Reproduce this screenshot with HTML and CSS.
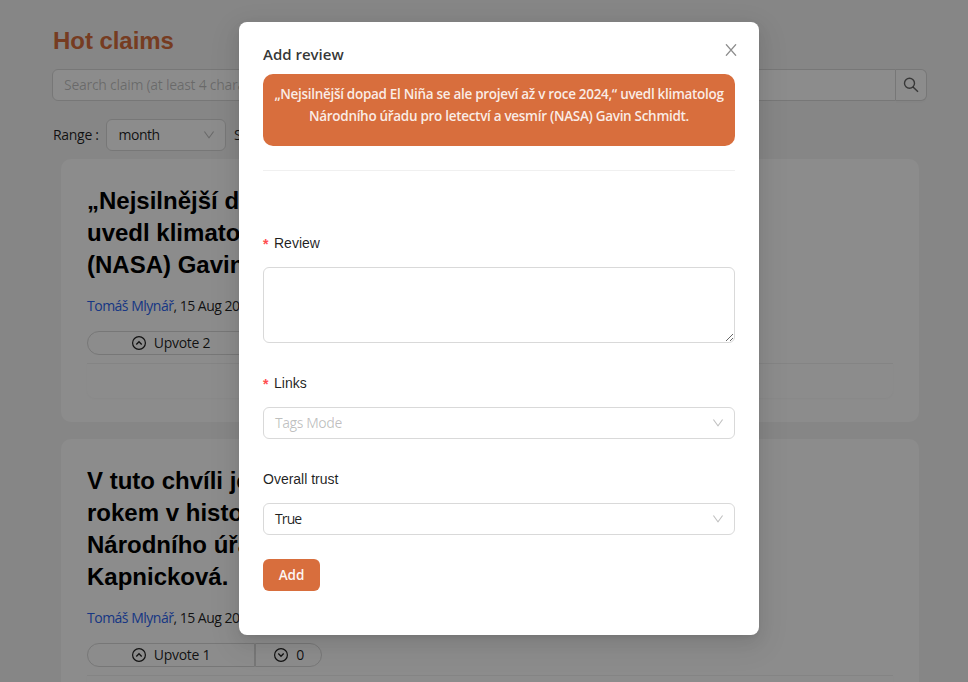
FILE: index.html
```html
<!DOCTYPE html>
<html lang="en">
<head>
<meta charset="utf-8">
<title>Hot claims</title>
<link rel="stylesheet" href="styles.css">
</head>
<body>
<svg class="defs" width="0" height="0">
  <symbol id="down" viewBox="64 64 896 896"><path d="M884 256h-75c-5.1 0-9.9 2.5-12.9 6.6L512 654.200 227.900 262.600c-3-4.100-7.800-6.600-12.900-6.600h-75c-6.500 0-10.300 7.400-6.500 12.700l352.600 486.100c12.800 17.600 39 17.600 51.700 0l352.600-486.100c3.900-5.300.1-12.700-6.400-12.700z"/></symbol>
  <symbol id="vote" viewBox="0 0 14 14"><circle cx="7" cy="7" r="6.400" fill="none" stroke="currentColor" stroke-width="1.200"/><path d="M4.300 8.500L7 5.700l2.700 2.800" fill="none" stroke="currentColor" stroke-width="1.300"/></symbol>
</svg>
<main class="page">
  <h1 class="heading">Hot claims</h1>
  <div class="search">
    <div class="search-input">Search claim (at least 4 characters)</div>
    <div class="search-button">
      <svg width="16" height="16" viewBox="0 0 16 16"><circle cx="6.500" cy="6.300" r="5" fill="none" stroke="currentColor" stroke-width="1.400"/><path d="M10 10l5 4.800" fill="none" stroke="currentColor" stroke-width="1.500"/></svg>
    </div>
  </div>
  <div class="filters">
    <span class="filter-label">Range :</span>
    <div class="select small"><span>month</span><svg class="arrow"><use href="#down"/></svg></div>
    <span class="sort-label">Sort by :</span>
  </div>
  <article class="card">
    <h2 class="title">„Nejsilnější dopad El Niña se ale projeví<br>uvedl klimatolog Národního úřadu<br>(NASA) Gavin Schmidt.</h2>
    <p class="meta"><a>Tomáš Mlynář</a>, 15 Aug 2023</p>
    <div class="votes">
      <div class="up"><svg class="vote"><use href="#vote"/></svg><span>Upvote 2</span></div>
      <div class="dn"><svg class="vote flip"><use href="#vote"/></svg><span>0</span></div>
    </div>
    <div class="panel"></div>
  </article>
  <article class="card">
    <h2 class="title">V tuto chvíli je rok 2023 třetím<br>rokem v historii, uvedla vědkyně<br>Národního úřadu Sarah<br>Kapnicková.</h2>
    <p class="meta"><a>Tomáš Mlynář</a>, 15 Aug 2023</p>
    <div class="votes">
      <div class="up"><svg class="vote"><use href="#vote"/></svg><span>Upvote 1</span></div>
      <div class="dn"><svg class="vote flip"><use href="#vote"/></svg><span>0</span></div>
    </div>
    <div class="panel"></div>
  </article>
</main>
<div class="mask">
  <section class="modal">
    <header class="modal-head">
      <h3 class="modal-title">Add review</h3>
      <svg class="close" viewBox="0 0 12 12"><path d="M1 .3L11 11.700M11 .3L1 11.700" fill="none" stroke="currentColor" stroke-width="1.300"/></svg>
    </header>
    <div class="quote"><span class="q1">„Nejsilnější dopad El Niña se ale projeví až v roce 2024,“ uvedl klimatolog</span><br><span class="q2">Národního úřadu pro letectví a vesmír (NASA) Gavin Schmidt.</span></div>
    <hr class="divider">
    <form class="form">
      <label class="label"><i>*</i>Review</label>
      <textarea class="area"></textarea>
      <label class="label"><i>*</i>Links</label>
      <div class="select"><span class="placeholder">Tags Mode</span><svg class="arrow"><use href="#down"/></svg></div>
      <label class="label">Overall trust</label>
      <div class="select"><span class="value">True</span><svg class="arrow"><use href="#down"/></svg></div>
      <button type="button" class="add">Add</button>
    </form>
  </section>
</div>
</body>
</html>
```
FILE: styles.css
```css
* { box-sizing: border-box; }
body {
  margin: 0;
  height: 682px;
  overflow: hidden;
  background: #f5f5f5;
  color: rgba(0, 0, 0, .88);
  font: 14px/22px "Open Sans", "Noto Sans", sans-serif;
}
h1, h2, h3, p { margin: 0; }
.defs { position: absolute; }
.page { width: 927px; height: 682px; padding: 21px 0 0 52px; overflow: hidden; }
.heading {
  padding-left: 1px;
  color: #d86e3d;
  font: bold 24px/40px "Liberation Sans", sans-serif;
  letter-spacing: -.05px;
}
.search { display: flex; height: 32px; margin-top: 8px; }
.search-input {
  flex: 1;
  padding: 4px 11px;
  border: 1px solid #d9d9d9;
  border-radius: 6px 0 0 6px;
  background: #fff;
  color: rgba(0, 0, 0, .25);
  letter-spacing: -.28px;
}
.search-button {
  display: flex;
  align-items: center;
  justify-content: center;
  width: 31px;
  border: 1px solid #d9d9d9;
  border-left: 0;
  border-radius: 0 6px 6px 0;
  background: #fff;
  color: rgba(0, 0, 0, .6);
  box-shadow: 0 2px 0 rgba(0, 0, 0, .02);
}
.filters { display: flex; align-items: center; height: 32px; margin-top: 18px; }
.filter-label { width: 54px; padding-left: 1px; white-space: nowrap; letter-spacing: -.3px; }
.sort-label { margin-left: 8px; }
.select {
  display: flex;
  align-items: center;
  justify-content: space-between;
  height: 32px;
  padding: 0 10px 0 11px;
  border: 1px solid #d9d9d9;
  border-radius: 6px;
  background: #fff;
}
.small { width: 120px; letter-spacing: -.5px; }
.small span { padding-left: .5px; }
.arrow { width: 12px; height: 12px; fill: rgba(0, 0, 0, .25); }
.card {
  width: 858px;
  margin: 8px 0 0 9px;
  padding: 26px;
  border-radius: 10px;
  background: #fff;
}
.card + .card { margin-top: 17px; }
.title {
  color: #000;
  font: bold 24px/32px "Liberation Sans", sans-serif;
  white-space: nowrap;
}
.meta { margin-top: 14px; letter-spacing: -.5px; }
.meta a { color: #2b64f0; }
.votes { display: flex; height: 24px; margin-top: 14px; }
.up, .dn {
  display: flex;
  align-items: center;
  justify-content: center;
  gap: 8px;
  border: 1px solid #d9d9d9;
  letter-spacing: -.3px;
}
.up { width: 168px; border-radius: 12px 0 0 12px; }
.dn { width: 67px; border-radius: 0 12px 12px 0; padding-left: 1px; }
.vote { width: 14px; height: 14px; }
.flip { transform: rotate(180deg); }
.panel {
  height: 35px;
  margin: 8px 0 -2px;
  border-top: 1px solid #f0f0f0;
  border-radius: 0 0 8px 8px;
  box-shadow: 0 1px 2px rgba(0, 0, 0, .03);
}
.mask { position: absolute; inset: 0; background: rgba(0, 0, 0, .45); }
.modal {
  width: 520px;
  height: 613px;
  margin: 22px 0 0 239px;
  padding: 20px 24px;
  border-radius: 8px;
  background: #fff;
  box-shadow: 0 6px 16px rgba(0, 0, 0, .08), 0 3px 6px -4px rgba(0, 0, 0, .12), 0 9px 28px 8px rgba(0, 0, 0, .05);
}
.modal-head { display: flex; justify-content: space-between; height: 32px; }
.modal-title { font-size: 15px; line-height: 24px; font-weight: 600; color: rgba(0, 0, 0, .8); }
.close { width: 12px; height: 12px; margin: 2px -2px 0 0; color: rgba(0, 0, 0, .45); }
.quote {
  height: 72px;
  padding-top: 9px;
  border-radius: 10px;
  background: #d86e3d;
  color: rgba(255, 255, 255, .88);
  font-size: 13.500px;
  font-weight: 600;
  letter-spacing: -.3px;
  text-align: center;
  white-space: nowrap;
}
.divider { height: 1px; margin: 24px 0 60px; border: 0; background: #f0f0f0; }
.form { display: flex; flex-direction: column; }
.label {
  height: 24px;
  margin-bottom: 12px;
  font: 14px/24px "Liberation Sans", sans-serif;
}
.label i {
  display: inline-block;
  width: 7px;
  height: 20px;
  margin-right: 4px;
  color: #ff4d4f;
  font-style: normal;
  font-weight: bold;
  vertical-align: -1px;
}
.area {
  height: 76px;
  margin-bottom: 28px;
  border: 1px solid #d9d9d9;
  border-radius: 6px;
  resize: vertical;
}
.form .select { margin-bottom: 28px; }
.placeholder { color: rgba(0, 0, 0, .25); letter-spacing: -.45px; }
.value { letter-spacing: -.9px; }
.form .select + .add { margin-top: -4px; }
.add {
  width: 57px;
  height: 32px;
  padding: 0;
  border: 0;
  border-radius: 6px;
  background: #d86e3d;
  color: rgba(255, 255, 255, .95);
  font: 600 13.500px/22px "Open Sans", sans-serif;
}
```
